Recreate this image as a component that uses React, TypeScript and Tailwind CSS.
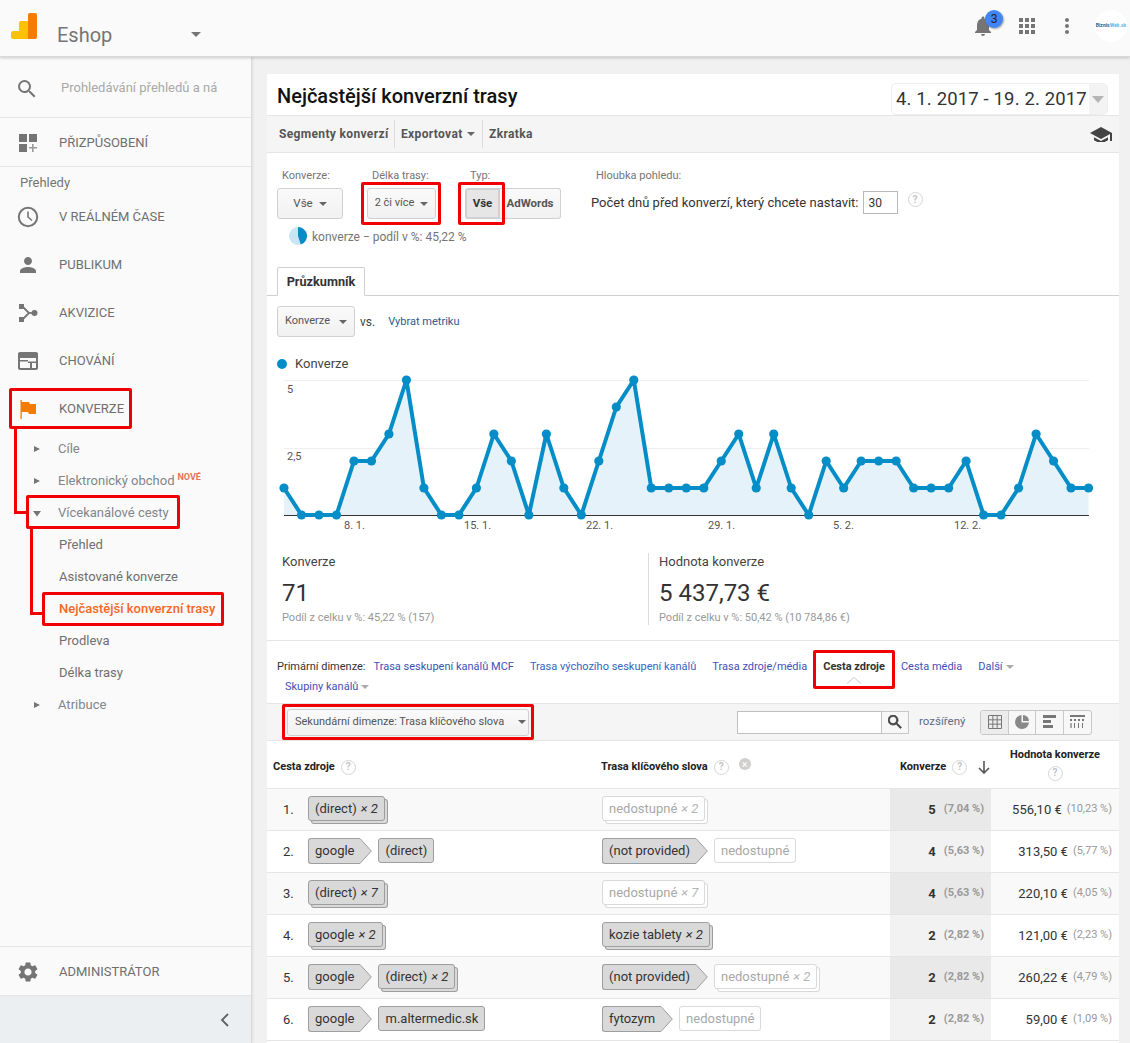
import React from "react";

const vals = [1,0,0,0,2,2,3,5,1,0,0,1,3,2,0,3,1,0,2,4,5,1,1,1,1,2,3,1,3,1,0,2,1,2,2,2,1,1,1,2,0,0,1,3,2,1,1];
const px = (i: number) => 17 + i * 17.49;
const py = (v: number) => 140 - v * 27;
const linePts = vals.map((v, i) => `${px(i)},${py(v)}`).join(" ");

function Caret({ className = "" }: { className?: string }) {
  return <svg width="10" height="5" viewBox="0 0 10 5" className={className}><path d="M0 0h10L5 5z" fill="currentColor" /></svg>;
}

function Help({ className = "" }: { className?: string }) {
  return <span className={`inline-flex h-[15px] w-[15px] shrink-0 items-center justify-center rounded-full border border-[#d5d5d5] bg-white text-[10px] font-bold leading-none text-[#c4c4c4] ${className}`}>?</span>;
}

function NavIcon({ d }: { d: string }) {
  return <svg width="24" height="24" viewBox="0 0 24 24" fill="#757575"><path d={d} /></svg>;
}

function TopItem({ icon, label }: { icon: React.ReactNode; label: string }) {
  return (
    <div className="flex h-[48px] items-center pt-[2px]">
      <div className="flex w-[59px] justify-center pr-[3px] pl-0">{icon}</div>
      <span className="text-[13px] text-[#6f6f6f]">{label}</span>
    </div>
  );
}

function SubItem({ label, arrow, active, nove }: { label: string; arrow?: "r" | "d"; active?: boolean; nove?: boolean }) {
  return (
    <div className="flex h-[32px] items-center pt-[2px]">
      <div className="flex w-[58px] justify-start pl-[33px]">
        {arrow === "r" && <svg width="8" height="8" viewBox="0 0 8 8"><path d="M1 1l6 3-6 3z" fill="#757575" /></svg>}
        {arrow === "d" && <svg width="9" height="7" viewBox="0 0 9 7"><path d="M0 1h8L4 6.5z" fill="#757575" /></svg>}
      </div>
      <span className={`text-[13px] ${active ? "ml-[1px] font-medium text-[#f4671f]" : arrow ? "text-[#80868b]" : "ml-[1px] text-[#6f6f6f]"}`}>{label}</span>
      {nove && <span className="mb-[7px] ml-[3px] text-[9px] font-bold text-[#e5735c]">NOVÉ</span>}
    </div>
  );
}

function Chip({ t, x, arrow, na }: { t: string; x?: string; arrow?: boolean; na?: boolean }) {
  const fill = na ? "#ffffff" : "#d9d9d9";
  const line = na ? "#d9d9d9" : "#9e9e9e";
  const color = na ? "text-[#a8a8a8]" : "text-[#333]";
  const surface = na ? "bg-white border-[#d9d9d9]" : "bg-[#d9d9d9] border-[#9e9e9e]";
  const body = (
    <>
      {t}
      {x && <i className={`ml-[4px] ${na ? "text-[#b5b5b5]" : "text-[#333]"}`}>× {x}</i>}
    </>
  );
  if (arrow) {
    return (
      <span className="inline-flex h-[26px]">
        <span className={`flex items-center rounded-l-[3px] border-y border-l pr-[5px] pl-[6px] text-[13px] ${surface} ${color}`}>{body}</span>
        <svg width="13" height="26" viewBox="0 0 13 26" className="shrink-0">
          <path d="M0 .5h1L12.3 13 1 25.500H0z" fill={fill} />
          <path d="M0 .5h1L12.300 13 1 25.500H0" fill="none" stroke={line} />
        </svg>
      </span>
    );
  }
  const stack = x ? (na ? "shadow-[3px_3px_0_-1px_#ffffff,3px_3px_0_0_#d9d9d9]" : "shadow-[3px_3px_0_-1px_#d9d9d9,3px_3px_0_0_#9e9e9e]") : "";
  return <span className={`flex h-[25px] items-center rounded-[3px] border px-[6px] text-[13px] ${surface} ${color} ${stack}`}>{body}</span>;
}

type C = { t: string; x?: string; arrow?: boolean; na?: boolean };
const rows: { n: number; a: C[]; b: C[]; c: number; cp: string; v: string; vp: string }[] = [
  { n: 1, a: [{ t: "(direct)", x: "2" }], b: [{ t: "nedostupné", x: "2", na: true }], c: 5, cp: "(7,04 %)", v: "556,10 €", vp: "(10,23 %)" },
  { n: 2, a: [{ t: "google", arrow: true }, { t: "(direct)" }], b: [{ t: "(not provided)", arrow: true }, { t: "nedostupné", na: true }], c: 4, cp: "(5,63 %)", v: "313,50 €", vp: "(5,77 %)" },
  { n: 3, a: [{ t: "(direct)", x: "7" }], b: [{ t: "nedostupné", x: "7", na: true }], c: 4, cp: "(5,63 %)", v: "220,10 €", vp: "(4,05 %)" },
  { n: 4, a: [{ t: "google", x: "2" }], b: [{ t: "kozie tablety", x: "2" }], c: 2, cp: "(2,82 %)", v: "121,00 €", vp: "(2,23 %)" },
  { n: 5, a: [{ t: "google", arrow: true }, { t: "(direct)", x: "2" }], b: [{ t: "(not provided)", arrow: true }, { t: "nedostupné", x: "2", na: true }], c: 2, cp: "(2,82 %)", v: "260,22 €", vp: "(4,79 %)" },
  { n: 6, a: [{ t: "google", arrow: true }, { t: "m.altermedic.sk" }], b: [{ t: "fytozym", arrow: true }, { t: "nedostupné", na: true }], c: 2, cp: "(2,82 %)", v: "59,00 €", vp: "(1,09 %)" },
];

function Btn({ children, className = "" }: { children: React.ReactNode; className?: string }) {
  return <div className={`flex h-[31px] items-center justify-center whitespace-nowrap rounded-[3px] border border-[#d0d0d0] bg-gradient-to-b from-[#fafafa] to-[#f1f1f1] text-[11.500px] text-[#555] ${className}`}>{children}</div>;
}

function RedBox({ c }: { c: string }) {
  return <div className={`pointer-events-none absolute z-20 rounded-[2px] border-[3px] border-[#f00000] ${c}`} />;
}

export default function App() {
  return (
    <div className="relative flex h-[1043px] w-[1130px] flex-col overflow-hidden bg-[#f1f1f1] font-[Roboto,sans-serif]">
      {/* header */}
      <header className="z-10 flex h-[57px] shrink-0 items-center border-b border-[#d9d9d9] bg-[#fafafa] shadow-[0_1px_3px_rgba(0,0,0,0.2)]">
        <svg width="26" height="26" viewBox="0 0 26 26" className="mb-[5px] ml-[11px]">
          <rect x="0" y="18" width="10" height="8" rx="2" fill="#ffc107" />
          <path d="M8 10a2 2 0 0 1 2-2h9v18H8z" fill="#ffc107" />
          <path d="M17 2a2 2 0 0 1 2-2h5a2 2 0 0 1 2 2v22a2 2 0 0 1-2 2h-7z" fill="#f57c00" />
        </svg>
        <span className="ml-[20px] mt-[13px] text-[20px] text-[#757575]">Eshop</span>
        <Caret className="ml-[79px] mt-[12px] text-[#757575]" />
        <div className="mb-[4px] ml-auto flex items-center pr-[3px]">
          <div className="relative mr-[20px] flex">
            <svg width="24" height="24" viewBox="0 0 24 24" fill="#757575"><path d="M12 22c1.1 0 2-.9 2-2h-4c0 1.1.9 2 2 2zm6-6v-5c0-3.07-1.63-5.64-4.5-6.32V4c0-.83-.67-1.5-1.5-1.5s-1.5.67-1.5 1.5v.68C7.64 5.36 6 7.92 6 11v5l-2 2v1h16v-1l-2-2z" /></svg>
            <span className="absolute left-[14px] top-[-4px] flex h-[18px] w-[18px] items-center justify-center rounded-full bg-[#4285f4] text-[12px] text-[#222] shadow-[1px_1px_2px_rgba(0,0,0,0.35)]">3</span>
          </div>
          <svg width="24" height="24" viewBox="0 0 24 24" fill="#757575" className="mr-[16px]"><path d="M4 8h4V4H4v4zm6 12h4v-4h-4v4zm-6 0h4v-4H4v4zm0-6h4v-4H4v4zm6 0h4v-4h-4v4zm6-10v4h4V4h-4zm-6 4h4V4h-4v4zm6 6h4v-4h-4v4zm0 6h4v-4h-4v4z" /></svg>
          <svg width="24" height="24" viewBox="0 0 24 24" fill="#757575" className="mr-[16px]"><path d="M12 8c1.1 0 2-.9 2-2s-.9-2-2-2-2 .9-2 2 .9 2 2 2zm0 2c-1.1 0-2 .9-2 2s.9 2 2 2 2-.9 2-2-.9-2-2-2zm0 6c-1.1 0-2 .9-2 2s.9 2 2 2 2-.9 2-2-.9-2-2-2z" /></svg>
          <div className="flex h-[32px] w-[32px] items-center justify-center rounded-full bg-white text-[5px] font-bold"><span className="text-[#2f5f8f]">Biznis</span><span className="text-[#58b7e8]">Web.sk</span></div>
        </div>
      </header>

      <div className="flex min-h-0 flex-1">
        {/* sidebar */}
        <aside className="flex w-[252px] shrink-0 flex-col border-r border-[#dcdcdc] bg-[#fafafa] shadow-[1px_0_2px_rgba(0,0,0,0.08)]">
          <div className="flex h-[61px] shrink-0 items-center border-b border-[#e5e5e5] pt-[3px]">
            <div className="flex w-[61px] justify-center pr-[7px]"><NavIcon d="M15.5 14h-.79l-.28-.27A6.471 6.471 0 0 0 16 9.5 6.5 6.5 0 1 0 9.5 16c1.61 0 3.09-.59 4.23-1.57l.27.28v.79l5 4.99L20.49 19l-4.99-5zm-6 0C7.01 14 5 11.99 5 9.5S7.01 5 9.5 5 14 7.01 14 9.5 11.99 14 9.5 14z" /></div>
            <span className="mb-[1px] text-[13px] text-[#a9a9a9]">Prohledávání přehledů a ná</span>
          </div>
          <div className="shrink-0 border-b border-[#e5e5e5]">
            <TopItem label="PŘIZPŮSOBENÍ" icon={
              <svg width="20" height="20" viewBox="0 0 20 20" fill="#757575"><rect x="1" y="1" width="8" height="8" /><rect x="11" y="1" width="8" height="8" /><rect x="1" y="11" width="8" height="8" /><path d="M14 11h1.6v3H19v1.6h-3.4V19H14v-3.4h-3V14h3z" fill="#9a9a9a" /></svg>
            } />
          </div>
          <div className="flex h-[25px] shrink-0 items-center pl-[20px] pt-[6px] text-[13px] text-[#757575]">Přehledy</div>
          <TopItem label="V REÁLNÉM ČASE" icon={<svg width="24" height="24" viewBox="0 0 24 24" fill="none" stroke="#757575" strokeWidth="2"><circle cx="12" cy="12" r="9.2" /><path d="M12 6.5V12l4 3.5" strokeWidth="1.6" /></svg>} />
          <TopItem label="PUBLIKUM" icon={<NavIcon d="M12 12c2.21 0 4-1.79 4-4s-1.79-4-4-4-4 1.79-4 4 1.79 4 4 4zm0 2c-2.67 0-8 1.34-8 4v2h16v-2c0-2.66-5.33-4-8-4z" />} />
          <TopItem label="AKVIZICE" icon={<svg width="24" height="24" viewBox="0 0 24 24" fill="#757575"><rect x="3" y="3" width="5" height="5" /><rect x="3" y="16" width="5" height="5" /><circle cx="18.5" cy="12" r="3" /><path d="M6 5l7 7-7 7" fill="none" stroke="#757575" strokeWidth="1.8" /><path d="M12 12h5" stroke="#757575" strokeWidth="1.8" /></svg>} />
          <TopItem label="CHOVÁNÍ" icon={<svg width="24" height="24" viewBox="0 0 24 24" fill="#757575"><path d="M4 3h16a2 2 0 0 1 2 2v14a2 2 0 0 1-2 2H4a2 2 0 0 1-2-2V5a2 2 0 0 1 2-2zM4 9v10h10v-5h-2v-1.600h8V9zm12 5v5h4v-5zM4 11v1.400h8V11z" fillRule="evenodd" /></svg>} />
          <TopItem label="KONVERZE" icon={<svg width="24" height="24" viewBox="0 0 24 24" fill="#f57c00"><path d="M4.5 3h1.3v2H13l1 2h6v10h-7l-1-2H5.800v7H4.500z" /></svg>} />
          <SubItem label="Cíle" arrow="r" />
          <SubItem label="Elektronický obchod" arrow="r" nove />
          <SubItem label="Vícekanálové cesty" arrow="d" />
          <SubItem label="Přehled" />
          <SubItem label="Asistované konverze" />
          <SubItem label="Nejčastější konverzní trasy" active />
          <SubItem label="Prodleva" />
          <SubItem label="Délka trasy" />
          <SubItem label="Atribuce" arrow="r" />
          <div className="flex-1" />
          <div className="shrink-0 border-y border-[#e5e5e5]">
            <TopItem label="ADMINISTRÁTOR" icon={<NavIcon d="M19.14 12.94c.04-.3.06-.61.06-.94 0-.32-.02-.64-.07-.94l2.03-1.58a.49.49 0 0 0 .12-.61l-1.92-3.32a.488.488 0 0 0-.59-.22l-2.39.96c-.5-.38-1.03-.7-1.62-.94l-.36-2.54a.484.484 0 0 0-.48-.41h-3.84c-.24 0-.43.17-.47.41l-.36 2.54c-.59.24-1.13.57-1.62.94l-2.39-.96c-.22-.08-.47 0-.59.22L2.74 8.87c-.12.21-.08.47.12.61l2.03 1.58c-.05.3-.09.63-.09.94s.02.64.07.94l-2.03 1.58a.49.49 0 0 0-.12.61l1.92 3.32c.12.22.37.29.59.22l2.39-.96c.5.38 1.03.7 1.62.94l.36 2.54c.05.24.24.41.48.41h3.84c.24 0 .44-.17.47-.41l.36-2.54c.59-.24 1.13-.56 1.62-.94l2.39.96c.22.08.47 0 .59-.22l1.92-3.32c.12-.22.07-.47-.12-.61l-2.01-1.58zM12 15.600c-1.98 0-3.6-1.62-3.6-3.6s1.62-3.6 3.600-3.6 3.6 1.62 3.6 3.6-1.620 3.6-3.600 3.600z" />} />
          </div>
          <div className="flex h-[47px] shrink-0 items-center justify-end bg-[#eceff1] pr-[20px]">
            <svg width="12" height="14" viewBox="0 0 12 14" fill="none" stroke="#616161" strokeWidth="1.8"><path d="M9 1L3 7l6 6" /></svg>
          </div>
        </aside>

        {/* main */}
        <main className="min-w-0 flex-1 pl-[15px] pr-[11px] pt-[17px]">
          <div className="h-[970px] overflow-hidden bg-white">
            <div className="flex h-[42px] items-center border-b border-[#e5e5e5] pl-[10px] pr-[11px]">
              <h1 className="mt-[2px] text-[20px] font-medium text-[#111]">Nejčastější konverzní trasy</h1>
              <div className="ml-auto mt-[9px] flex h-[32px] w-[217px] items-stretch overflow-hidden rounded-[5px] border border-[#eeeeee]">
                <div className="flex flex-1 items-center whitespace-nowrap pl-[4px] pt-[2px] text-[18.500px] tracking-[0.15px] text-[#333]">4. 1. 2017 - 19. 2. 2017</div>
                <div className="flex w-[18px] items-center justify-center bg-[#f3f3f3] text-[#b5b5b5]"><svg width="12" height="7" viewBox="0 0 12 7"><path d="M0 0h12L6 7z" fill="currentColor" /></svg></div>
              </div>
            </div>
            <div className="flex h-[37px] items-center border-b border-[#e5e5e5] bg-[#f5f5f5] text-[12px] font-bold tracking-[0.35px] text-[#555]">
              <div className="flex h-[28px] w-[128px] items-center whitespace-nowrap border-r border-[#dcdcdc] pl-[12px]">Segmenty konverzí</div>
              <div className="flex h-[28px] w-[88px] items-center gap-[4px] whitespace-nowrap border-r border-[#dcdcdc] pl-[6px]">Exportovat <Caret className="h-[4px] w-[8px] text-[#666]" /></div>
              <div className="pl-[6px]">Zkratka</div>
              <svg width="22" height="16" viewBox="1 3 22 14" fill="#444" className="ml-auto mr-[7px]"><path d="M5 13.18v3L12 20l7-3.820v-3L12 17zM12 3L1 9l11 6 9-4.910V17h2V9z" /></svg>
            </div>

            {/* options */}
            <div className="h-[114px] pl-[10px] pt-[14px]">
              <div className="flex">
                <div className="w-[90px]">
                  <div className="h-[18px] pl-[5px] text-[11px] leading-[18px] text-[#757575]">Konverze:</div>
                  <Btn className="mt-[3px] w-[66px] gap-[6px]">Vše <Caret className="h-[4px] w-[8px] text-[#666]" /></Btn>
                </div>
                <div className="w-[98px]">
                  <div className="h-[18px] pl-[5px] text-[11px] leading-[18px] text-[#757575]">Délka trasy:</div>
                  <Btn className="mt-[3px] w-[69px] gap-[6px] text-[11px]">2 či více <Caret className="h-[4px] w-[8px] text-[#666]" /></Btn>
                </div>
                <div className="w-[126px]">
                  <div className="h-[18px] pl-[5px] text-[11px] leading-[18px] text-[#757575]">Typ:</div>
                  <div className="mt-[3px] flex">
                    <div className="flex h-[31px] w-[35px] items-center justify-center rounded-l-[3px] border-[2px] border-[#d0d0d0] bg-[#e6e6e6] text-[11.500px] font-bold text-[#333]">Vše</div>
                    <Btn className="w-[61px] rounded-l-none border-l-0 font-bold text-[#444]">AdWords</Btn>
                  </div>
                </div>
                <div>
                  <div className="h-[18px] pl-[5px] text-[11px] leading-[18px] text-[#757575]">Hloubka pohledu:</div>
                  <div className="mt-[6px] flex items-start">
                    <span className="mt-[2px] whitespace-nowrap text-[13px] text-[#333]">Počet dnů před konverzí, který chcete nastavit:</span>
                    <div className="ml-[4px] flex h-[23px] w-[35px] items-center border border-[#b9b9b9] pl-[5px] text-[12px] text-[#333]">30</div>
                    <Help className="ml-[10px] mt-[1px]" />
                  </div>
                </div>
              </div>
              <div className="ml-[12px] mt-[6px] flex items-center">
                <svg width="18" height="18" viewBox="0 0 18 18"><circle cx="9" cy="9" r="9" fill="#c7e5f3" /><path d="M9 9V0a9 9 0 0 1 2.800 17.550z" fill="#058dc7" /></svg>
                <span className="ml-[5px] mt-[3px] text-[12px] text-[#757575]">konverze − podíl v %: 45,22 %</span>
              </div>
            </div>

            {/* tab */}
            <div className="flex h-[29px] items-end border-b border-[#cfcfcf] pl-[10px]">
              <div className="mb-[-1px] flex h-[29px] w-[88px] items-center justify-center rounded-t-[2px] border border-b-white border-[#cfcfcf] bg-white text-[12.700px] font-bold text-[#333]">Průzkumník</div>
            </div>

            <div className="flex items-center pl-[10px] pt-[10px]">
              <Btn className="w-[78px] gap-[9px] text-[11px]">Konverze <Caret className="h-[4px] w-[8px] text-[#666]" /></Btn>
              <span className="ml-[5px] text-[12px] text-[#444]">vs.</span>
              <span className="ml-[13px] mt-[1px] text-[11px] text-[#2a5b94]">Vybrat metriku</span>
            </div>

            <div className="mt-[19px] flex h-[15px] items-center pl-[10px]">
              <span className="h-[10px] w-[10px] rounded-full bg-[#058dc7]" />
              <span className="ml-[8px] text-[13px] text-[#444]">Konverze</span>
            </div>

            {/* chart */}
            <svg width="852" height="160" viewBox="0 0 852 160" className="mt-[4px] block">
              <line x1="17" x2="822" y1="5.500" y2="5.500" stroke="#eeeeee" />
              <line x1="17" x2="822" y1="73.500" y2="73.500" stroke="#eeeeee" />
              <polygon points={`${px(0)},140 ${linePts} ${px(46)},140`} fill="#e5f2f9" />
              <line x1="17" x2="822" y1="140.500" y2="140.500" stroke="#333" />
              <polyline points={linePts} fill="none" stroke="#058dc7" strokeWidth="4" strokeLinejoin="round" />
              {vals.map((v, i) => <circle key={i} cx={px(i)} cy={py(v)} r="4.600" fill="#058dc7" />)}
              <g fontSize="11" fill="#555" fontFamily="Roboto, sans-serif">
                <text x="20" y="18">5</text>
                <text x="20" y="85">2,5</text>
                <text x="77" y="154">8. 1.</text>
                <text x="197" y="154">15. 1.</text>
                <text x="319" y="154">22. 1.</text>
                <text x="441" y="154">29. 1.</text>
                <text x="566" y="154">5. 2.</text>
                <text x="687" y="154">12. 2.</text>
              </g>
            </svg>

            {/* metrics */}
            <div className="flex h-[106px] border-b border-[#e5e5e5] pb-[15px] pt-[18px]">
              <div className="w-[382px] border-r border-[#dcdcdc] pl-[15px]">
                <div className="text-[13px] leading-[18px] text-[#444]">Konverze</div>
                <div className="mt-[7px] text-[24px] leading-[30px] text-[#333]">71</div>
                <div className="mt-[2px] text-[11px] text-[#999]">Podíl z celku v %: 45,22 % (157)</div>
              </div>
              <div className="pl-[10px]">
                <div className="text-[13px] leading-[18px] text-[#444]">Hodnota konverze</div>
                <div className="mt-[7px] text-[24px] leading-[30px] text-[#333]">5 437,73 €</div>
                <div className="mt-[2px] text-[11px] text-[#999]">Podíl z celku v %: 50,42 % (10 784,86 €)</div>
              </div>
            </div>

            {/* dimensions */}
            <div className="relative h-[62px] pl-[10px] text-[11px]">
              <div className="flex h-[38px] items-end whitespace-nowrap pb-[4px]">
                <span className="mr-[8px] text-[#333]">Primární dimenze:</span>
                <span className="mr-[16px] text-[#3f51b5]">Trasa seskupení kanálů MCF</span>
                <span className="mr-[16px] text-[#3565c0]">Trasa výchozího seskupení kanálů</span>
                <span className="mr-[16px] text-[#3f51b5]">Trasa zdroje/média</span>
                <span className="mr-[16px] font-bold text-[#333]">Cesta zdroje</span>
                <span className="mr-[16px] text-[#3f51b5]">Cesta média</span>
                <span className="flex items-center gap-[3px] text-[#3f51b5]">Další <Caret className="h-[4px] w-[8px] text-[#aaa]" /></span>
              </div>
              <span className="ml-[8px] flex items-center gap-[3px] text-[#3f51b5]">Skupiny kanálů <Caret className="h-[4px] w-[8px] text-[#aaa]" /></span>
              <svg width="14" height="7" viewBox="0 0 14 7" className="absolute left-[580px] top-[36px]"><path d="M0 6.500L7 .5l7 6" fill="none" stroke="#ccc" /></svg>
            </div>

            {/* filter bar */}
            <div className="flex h-[38px] items-center border-y border-[#e5e5e5] bg-[#f5f5f5] pl-[20px]">
              <div className="flex h-[27px] w-[242px] items-center gap-[14px] whitespace-nowrap rounded-[3px] border border-[#d0d0d0] bg-gradient-to-b from-[#fafafa] to-[#f1f1f1] pl-[7px] text-[11px] text-[#555]">Sekundární dimenze: Trasa klíčového slova <Caret className="h-[4px] w-[8px] text-[#666]" /></div>
              <div className="ml-[208px] h-[23px] w-[145px] border border-[#c0c0c0] bg-white" />
              <div className="flex h-[23px] w-[27px] items-center justify-center border-y border-r border-[#c8c8c8] bg-[#f7f7f7]">
                <svg width="14" height="14" viewBox="3 3 18 18" fill="#444"><path d="M15.500 14h-.79l-.28-.27A6.470 6.470 0 0 0 16 9.500 6.500 6.500 0 1 0 9.500 16c1.610 0 3.090-.59 4.230-1.570l.27.28v.79l5 4.990L20.490 19zm-6 0C7.010 14 5 11.990 5 9.500S7.010 5 9.500 5 14 7.010 14 9.500 11.990 14 9.500 14z" stroke="#444" strokeWidth="0.8" /></svg>
              </div>
              <span className="ml-[10px] text-[11.500px] text-[#5b6b8c]">rozšířený</span>
              <div className="ml-[15px] flex h-[25px] w-[112px] overflow-hidden rounded-[3px] border border-[#c8c8c8] bg-[#f7f7f7]">
                <div className="flex w-[28px] items-center justify-center border-r border-[#c8c8c8] bg-[#ececec]">
                  <svg width="14" height="14" viewBox="0 0 14 14" fill="none" stroke="#777"><path d="M.5.5h13v13H.5zM.5 4.830h13M.5 9.170h13M4.830.5v13M9.170.5v13" /></svg>
                </div>
                <div className="flex w-[28px] items-center justify-center border-r border-[#c8c8c8]">
                  <svg width="14" height="14" viewBox="0 0 14 14" fill="#888"><path d="M6.500 0A7 7 0 1 0 14 7.500H6.500z" /><path d="M8 0a6 6 0 0 1 6 6H8z" /></svg>
                </div>
                <div className="flex w-[28px] items-center justify-center border-r border-[#c8c8c8]">
                  <svg width="14" height="14" viewBox="0 0 14 14" fill="#777"><rect width="13" height="3" /><rect y="5" width="8" height="3" /><rect y="10" width="10" height="3" /></svg>
                </div>
                <div className="flex w-[28px] items-center justify-center">
                  <svg width="15" height="14" viewBox="0 0 15 14" fill="#777"><rect width="15" height="2" /><rect y="4" width="2" height="2" /><rect x="4" y="4" width="2" height="2" /><rect x="8" y="4" width="2" height="2" /><rect x="12" y="4" width="2" height="2" /><rect y="8" width="2" height="5" opacity=".6" /><rect x="4" y="8" width="1" height="5" /><rect x="8" y="8" width="1" height="5" /><rect x="12" y="8" width="1" height="5" /></svg>
                </div>
              </div>
            </div>

            {/* table */}
            <div className="grid grid-cols-[328px_295px_101px_128px]">
              <div className="flex h-[48px] items-center gap-[6px] border-b border-[#e5e5e5] pl-[6px] pt-[5px] text-[11px] font-bold text-[#222]">Cesta zdroje <Help /></div>
              <div className="flex h-[48px] items-center border-b border-[#e5e5e5] pl-[6px] pt-[5px] text-[11px] font-bold text-[#222]">Trasa klíčového slova <Help className="ml-[6px]" />
                <span className="mb-[6px] ml-[10px] flex h-[12px] w-[12px] items-center justify-center rounded-full bg-[#cfcfcf] text-[11px] font-normal leading-none text-white">×</span>
              </div>
              <div className="flex h-[48px] items-center border-b border-[#e5e5e5] pl-[10px] pt-[5px] text-[11px] font-bold text-[#222]">Konverze <Help className="ml-[6px]" />
                <svg width="12" height="13" viewBox="0 0 12 13" fill="none" stroke="#555" strokeWidth="1.600" className="ml-[11px]"><path d="M6 0v12M1 7l5 5 5-5" /></svg>
              </div>
              <div className="flex h-[48px] flex-col items-center justify-center gap-[2px] border-b border-[#e5e5e5] pb-[1px] text-[11px] font-bold text-[#222]">Hodnota konverze <Help /></div>

              {rows.map((r) => {
                const odd = r.n % 2 === 1;
                const bg = odd ? "bg-[#f9f9f9]" : "bg-white";
                return (
                  <React.Fragment key={r.n}>
                    <div className={`flex h-[42px] items-center border-b border-[#e5e5e5] ${bg}`}>
                      <span className="w-[41px] pl-[16px] text-[13px] text-[#333]">{r.n}.</span>
                      <div className="mb-[2px] flex items-center gap-[6px]">{r.a.map((c, i) => <Chip key={i} {...c} />)}</div>
                    </div>
                    <div className={`flex h-[42px] items-center border-b border-[#e5e5e5] pl-[7px] ${bg}`}>
                      <div className="mb-[2px] flex items-center gap-[6px]">{r.b.map((c, i) => <Chip key={i} {...c} />)}</div>
                    </div>
                    <div className={`flex h-[42px] items-center justify-end border-b border-[#e5e5e5] pr-[7px] ${odd ? "bg-[#e9e9e9]" : "bg-[#f2f2f2]"}`}>
                      <span className="text-[13px] font-bold text-[#333]">{r.c}</span>
                      <span className="ml-[8px] text-[11px] font-bold text-[#999]">{r.cp}</span>
                    </div>
                    <div className={`flex h-[42px] items-center justify-end border-b border-[#e5e5e5] pr-[7px] ${bg}`}>
                      <span className="text-[13px] text-[#333]">{r.v}</span>
                      <span className="ml-[5px] text-[11px] text-[#999]">{r.vp}</span>
                    </div>
                  </React.Fragment>
                );
              })}
            </div>
          </div>
        </main>
      </div>

      {/* red annotations */}
      <RedBox c="left-[9px] top-[388px] h-[41px] w-[123px]" />
      <RedBox c="left-[26px] top-[495px] h-[34px] w-[154px]" />
      <RedBox c="left-[42px] top-[592px] h-[34px] w-[182px]" />
      <div className="absolute left-[14px] top-[428px] z-20 h-[86px] w-[3px] bg-[#f00000]" />
      <div className="absolute left-[14px] top-[511px] z-20 h-[3px] w-[13px] bg-[#f00000]" />
      <div className="absolute left-[30px] top-[528px] z-20 h-[87px] w-[3px] bg-[#f00000]" />
      <div className="absolute left-[30px] top-[612px] z-20 h-[3px] w-[13px] bg-[#f00000]" />
      <RedBox c="left-[361px] top-[182px] h-[43px] w-[80px]" />
      <RedBox c="left-[458px] top-[182px] h-[43px] w-[47px]" />
      <RedBox c="left-[813px] top-[650px] h-[39px] w-[82px]" />
      <RedBox c="left-[282px] top-[704px] h-[36px] w-[252px]" />
    </div>
  );
}
